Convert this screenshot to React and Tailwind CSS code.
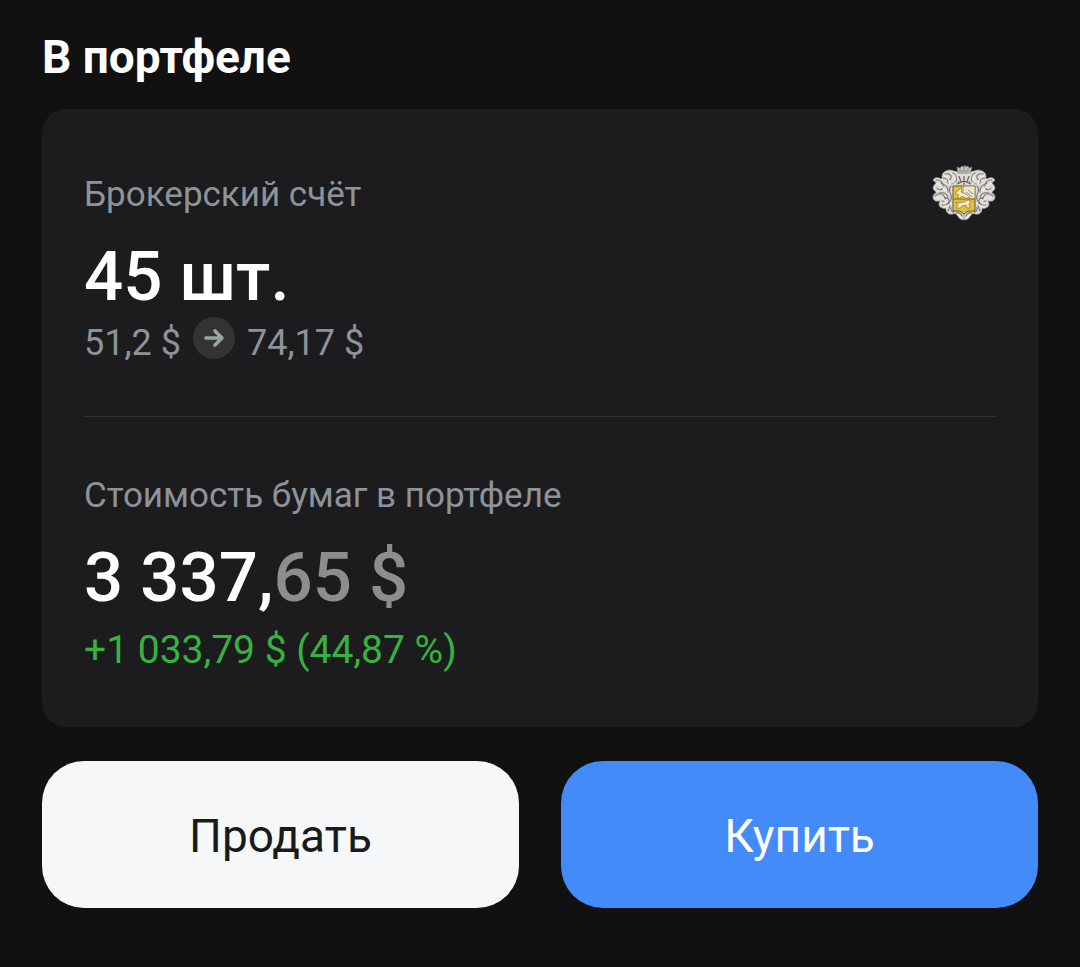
import React from "react";

// One half of the mantling, the other half is mirrored
const CrestHalf = () => (
  <>
    <path
      d="M33 10C29 11 27 8 23 8C19 6 15 7 12 10C10 13 12 15 10 16C7 14 4 14 2 17C3 19 5 19 6 20C3 21 2 23 2 26C3 28 5 28 5 30C2 31 1 34 3 37C5 39 7 38 9 38C7 41 8 44 11 45C13 46 14 45 15 46C15 50 18 52 22 51C25 50 26 52 28 55Q30 57 33 57Z"
      fill="#dddbd7"
      stroke="#8f8b87"
      strokeWidth="0.6"
    />
    <g fill="none" stroke="#7b7672" strokeWidth="1.1" strokeLinecap="round">
      <path d="M14 11c4-1 7 1 6 4s-5 2-4 0M22 10c3 2 4 5 3 8l-4 3M12 15c3 0 5 2 5 5" />
      <path d="M5 17c4 0 7 2 7 6s-4 5-6 2M10 20c5 2 8 5 7 9M4 33c3-3 7-3 9 0s1 6-2 5" />
      <path d="M8 30c5-1 8 1 9 4M11 42c4 1 7-1 7-4s-3-4-4-2M17 48c2-4 2-7 1-10" />
      <path d="M20 23c-3 3-1 7 0 9s0 6-2 8M20 44c-1 3 1 5 3 5M25 50c3-1 5 0 6 3M27 13l3 3-3 4" />
    </g>
    <g fill="none" stroke="#f6f4f0" strokeWidth="1.2" strokeLinecap="round">
      <path d="M13 13c3 1 5 4 6 7M5 20c4 1 7 4 9 8M6 35c4-1 7 1 9 3M13 43c4 1 6-1 7-4M23 12c2 3 1 6-1 8M27 52l3 3" />
    </g>
  </>
);

const Crest = () => (
  <svg viewBox="1 2 64 60" className="h-[60px] w-16" aria-label="Брокер" role="img">
    <CrestHalf />
    <g transform="matrix(-1 0 0 1 66 0)">
      <CrestHalf />
    </g>
    {/* корона */}
    <path
      d="M27 10L26 4l3 1 2-2 2 1 1-2 1 2 2-1 1 2 3-1-2 6z"
      fill="#cbc8c4"
      stroke="#77736f"
      strokeWidth="0.6"
    />
    <path d="M28 8h10M29 5v2M33 4v3M37 5v2" stroke="#6d6864" strokeWidth="0.8" />
    <path d="M26 12q7-3 14 0l-3 8 2 3H27l2-3z" fill="#dedbd7" />
    <path d="M33 13v9M28 13l2 6M38 13l-2 6M26 21l7-3 7 3" fill="none" stroke="#69635f" strokeWidth="1.2" />
    {/* щит */}
    <path d="M22 23h22v25h-7l-4 3-4-3h-7z" fill="#e2c03f" stroke="#665431" strokeWidth="1" />
    <path d="M33 23.500h10.500v12H33z" fill="#e9e5d8" />
    <path d="M22.500 36h21" stroke="#7a632c" strokeWidth="1" />
    <path
      d="M24 30l4-3 1-2 2 1-1 3 5 2 4 4h-4l-4-2-2 2h-3l2-3zM25 45l2-3-2-3 3 1 5-1 4-2 3 1-2 3 1 4h-3l-1-3-4 1-2 2z"
      fill="#f5eed3"
      stroke="#8e742f"
      strokeWidth="0.7"
    />
    <path d="M35 29l6 5M37 27l5 4" stroke="#77706a" strokeWidth="0.8" />
  </svg>
);

const Arrow = () => (
  <svg
    viewBox="0 0 42 42"
    className="size-[42px]"
    fill="none"
    stroke="#9ba3a6"
    strokeWidth="3.6"
    strokeLinecap="round"
    strokeLinejoin="round"
    aria-hidden="true"
  >
    <path d="M13 21H29M22 14L29 21L22 28" />
  </svg>
);

const App = () => {
  return (
    <main className="min-h-screen bg-[#111111] px-[42px] pt-[31px] pb-[59px] font-[Roboto,sans-serif] text-white">
      <h2 className="text-[46px] leading-[52px] font-bold">В портфеле</h2>

      <section className="mt-[26px] rounded-3xl bg-[#1c1c1e] px-[42px] pt-14 pb-[47px]">
        <div className="flex items-start justify-between">
          <div>
            <p className="text-[35px] leading-[60px] text-[#8e9299]">Брокерский счёт</p>
            <p className="mt-3 text-[69px] leading-[80px] font-medium">45 шт.</p>
            <div className="flex items-start gap-3 text-[36px] leading-[52px] text-[#8e9299]">
              <span>51,2 $</span>
              <span className="rounded-full bg-[#333333]">
                <Arrow />
              </span>
              <span>74,17 $</span>
            </div>
          </div>
          <Crest />
        </div>
        <hr className="mt-[47px] mb-[49px] border-[#303032]" />
        <p className="text-[35px] leading-[60px] text-[#8e9299]">Стоимость бумаг в портфеле</p>
        <p className="mt-3 text-[69px] leading-[80px] font-medium">
          3 337,<span className="text-[#8d8d8e]">65 $</span>
        </p>
        <p className="mt-0.5 text-[39px] leading-[60px] text-[#36b33e]">+1 033,79 $ (44,87 %)</p>
      </section>

      <div className="mt-[34px] grid grid-cols-2 gap-[42px]">
        <button type="button" className="h-[147px] rounded-[42px] bg-[#f6f7f8] pt-1 text-[46px] text-[#1a1a1a]">
          Продать
        </button>
        <button type="button" className="h-[147px] rounded-[42px] bg-[#428bf9] pt-1 text-[46px] text-white">
          Купить
        </button>
      </div>
    </main>
  );
};

export default App;
